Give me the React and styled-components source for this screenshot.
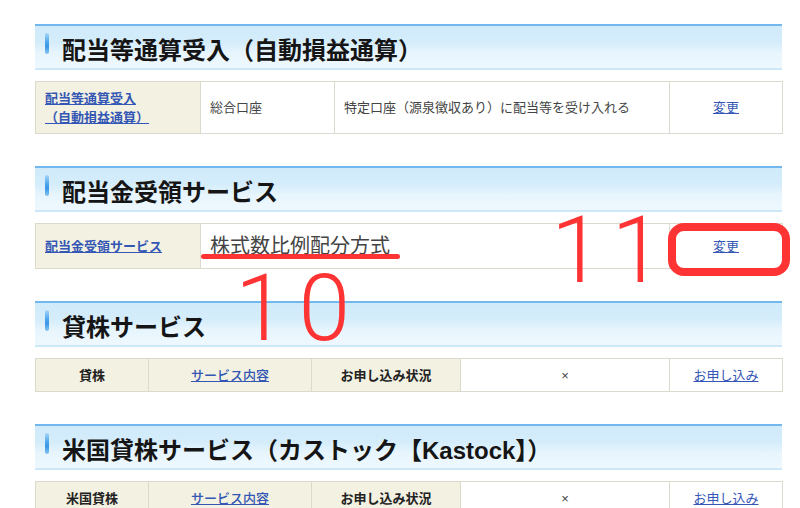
import React from "react";
import styled, { createGlobalStyle } from "styled-components";

const GlobalStyle = createGlobalStyle`
  body {
    margin: 0;
    background: #ffffff;
    font-family: "Liberation Sans", "Noto Sans CJK JP", sans-serif;
  }
`;

const Page = styled.div`
  position: relative;
  width: 800px;
  height: 508px;
  overflow: hidden;
  box-sizing: border-box;
  padding: 24px 18px 0 35px;
`;

const Section = styled.section`
  margin-bottom: 32px;
`;

const Heading = styled.h2`
  margin: 0;
  box-sizing: border-box;
  height: 46px;
  display: flex;
  align-items: center;
  padding: 2px 0 0 10px;
  border-top: 2px solid #72b8ee;
  border-bottom: 2px solid #cde8f8;
  background: linear-gradient(#d0eafa 0%, #d5edfb 40%, #e8f5fd 65%, #eef8fe 100%);
  font-family: "Liberation Sans", "Noto Sans CJK JP", sans-serif;
  font-size: 24px;
  font-weight: 700;
  color: #151515;
`;

const Marker = styled.span`
  align-self: flex-start;
  margin-top: 5px;
  margin-right: 13px;
  width: 4px;
  height: 21px;
  border-radius: 2px;
  background: linear-gradient(#a8d6f7 0%, #4aa3ec 45%, #3a97e6 65%, #86c6f4 100%);
`;

const Table = styled.table`
  margin-top: 11px;
  width: 747px;
  border-collapse: collapse;
  table-layout: fixed;
`;

const Row = styled.tr`
  height: ${(p) => p.$h}px;
`;

const Cell = styled.td`
  width: ${(p) => p.$w}px;
  box-sizing: border-box;
  border: 1px solid #dcdacd;
  padding: 0 9px;
  background: ${(p) => (p.$head ? "#f3f1e1" : "#ffffff")};
  text-align: ${(p) => p.$align || "left"};
  font-size: ${(p) => p.$size || 13}px;
  font-weight: ${(p) => (p.$bold ? 700 : 400)};
  line-height: 19px;
  color: ${(p) => (p.$bold ? "#222" : "#444")};
`;

const Link = styled.a`
  color: #3456b4;
  text-decoration: underline;
  font-weight: ${(p) => p.$weight || 400};
  cursor: pointer;
`;

const Underline = styled.span`
  position: absolute;
  left: 201px;
  top: 254px;
  width: 199px;
  height: 5px;
  border-radius: 3px;
  background: #fe3434;
`;

const Number = styled.span`
  position: absolute;
  left: ${(p) => p.$x}px;
  top: ${(p) => p.$y}px;
  font-family: Roboto, "Liberation Sans", sans-serif;
  font-weight: 300;
  font-size: 93px;
  line-height: 1;
  letter-spacing: ${(p) => p.$spacing || 0}px;
  color: #fe3434;
`;

const Frame = styled.span`
  position: absolute;
  left: 668px;
  top: 223px;
  width: 122px;
  height: 53px;
  box-sizing: border-box;
  border: 8px solid #fe3434;
  border-radius: 16px;
`;

const lending = [
  { label: "貸株" },
  { label: "米国貸株" },
];

function LendingRow({ label }) {
  return (
    <Row $h={33}>
      <Cell $w={113} $head $bold $align="center">{label}</Cell>
      <Cell $w={163} $head $align="center"><Link $weight={500}>サービス内容</Link></Cell>
      <Cell $w={149} $head $bold $align="center">お申し込み状況</Cell>
      <Cell $w={209} $align="center">×</Cell>
      <Cell $w={113} $align="center"><Link>お申し込み</Link></Cell>
    </Row>
  );
}

export default function App() {
  return (
    <>
      <GlobalStyle />
      <Page>
        <Section>
          <Heading><Marker />配当等通算受入（自動損益通算）</Heading>
          <Table>
            <tbody>
              <Row $h={52}>
                <Cell $w={165} $head>
                  <Link $weight={700}>配当等通算受入<br />（自動損益通算）</Link>
                </Cell>
                <Cell $w={134}>総合口座</Cell>
                <Cell $w={335}>特定口座（源泉徴収あり）に配当等を受け入れる</Cell>
                <Cell $w={113} $align="center"><Link>変更</Link></Cell>
              </Row>
            </tbody>
          </Table>
        </Section>

        <Section>
          <Heading><Marker />配当金受領サービス</Heading>
          <Table>
            <tbody>
              <Row $h={45}>
                <Cell $w={165} $head><Link $weight={700}>配当金受領サービス</Link></Cell>
                <Cell $w={469} $size={20}>株式数比例配分方式</Cell>
                <Cell $w={113} $align="center"><Link>変更</Link></Cell>
              </Row>
            </tbody>
          </Table>
        </Section>

        <Section>
          <Heading><Marker />貸株サービス</Heading>
          <Table>
            <tbody>
              <LendingRow {...lending[0]} />
            </tbody>
          </Table>
        </Section>

        <Section>
          <Heading><Marker />米国貸株サービス（カストック【Kastock】）</Heading>
          <Table>
            <tbody>
              <LendingRow {...lending[1]} />
            </tbody>
          </Table>
        </Section>

        <Underline />
        <Number $x={235} $y={262} $spacing={12}>10</Number>
        <Number $x={551} $y={204} $spacing={9}>11</Number>
        <Frame />
      </Page>
    </>
  );
}
